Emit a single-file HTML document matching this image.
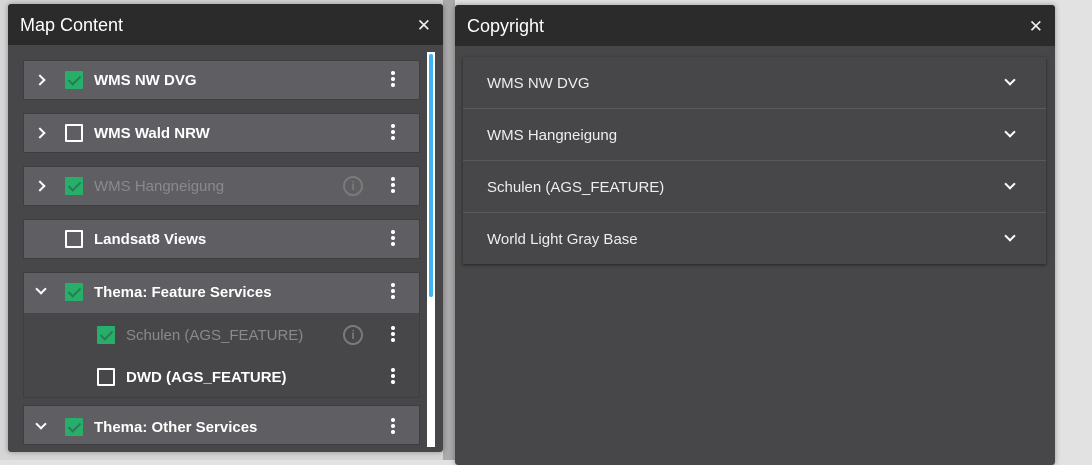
<!DOCTYPE html>
<html><head><meta charset="utf-8"><style>
*{box-sizing:border-box;margin:0;padding:0}
body{width:1092px;height:460px;overflow:hidden;background:#e2e2e2;font-family:"Liberation Sans",sans-serif;position:relative}
.bgl{position:absolute;left:0;top:0;width:455px;height:460px;background:#d6d6d6}
.gap{position:absolute;left:443px;top:0;width:12px;height:460px;background:#aaaaaa}
.p{position:absolute;background:#474749;box-shadow:0 0 6px rgba(0,0,0,.35)}
.hd{position:absolute;left:0;top:0;right:0;height:41px;background:#2b2b2b;color:#fff;font-size:18px;line-height:43px;padding-left:12px;border-radius:3px 3px 0 0}
.x{position:absolute;right:12px;top:0;font-size:17px;color:#eee}
.row{position:absolute;left:15px;width:397px;height:40px;background:#5f5f63;border:1px solid #3e3e40;color:#fff;font-weight:bold;font-size:15px}
.row span.t{position:absolute;left:70px;top:11px}
.cb{position:absolute;width:18px;height:18px;border:2px solid #fff;border-radius:1px}
.cb.on{background:#26ae6a;border:none}
.cb.on:after{content:"";position:absolute;left:6px;top:2px;width:5px;height:10px;border:solid #2a7a52;border-width:0 2px 2px 0;transform:rotate(45deg)}
.dots{position:absolute;width:4px;height:4px;background:#fff;border-radius:2px;box-shadow:0 6px 0 #fff,0 12px 0 #fff}
.ch{position:absolute;width:8px;height:8px;border:solid #fff;border-width:0 2.5px 2.5px 0}
.info{position:absolute;width:20px;height:20px;border:2px solid #7a7a7a;border-radius:50%;color:#7a7a7a;font-size:12px;font-weight:bold;text-align:center;line-height:16px}
.acc{position:absolute;left:8px;top:52px;width:583px;height:207px;background:#474749;box-shadow:0 1px 3px rgba(0,0,0,.5)}
.ai{height:52px;border-bottom:1px solid #5a5a5c;color:#eee;font-size:15px;line-height:54px;padding-left:24px;position:relative}
.ai:last-child{border-bottom:none}
.ai .ch{right:32px;top:19px;transform:rotate(45deg);width:8px;height:8px;border-width:0 2.5px 2.5px 0;border-color:#fff}
</style></head><body>
<div class="bgl"></div><div class="gap"></div>
<div class="p" style="left:8px;top:4px;width:435px;height:448px;border-radius:3px">
<div class="hd">Map Content<span class="x">✕</span></div>
<div style="position:absolute;left:419px;top:48px;width:8px;height:395px;background:#fff"></div>
<div style="position:absolute;left:421px;top:50px;width:4px;height:243px;background:#3db4f2;border-radius:2px"></div>

<div class="row" style="top:56px"><div class="ch" style="left:12px;top:15px;transform:rotate(-45deg)"></div><div class="cb on" style="left:41px;top:10px"></div><span class="t">WMS NW DVG</span><div class="dots" style="left:367px;top:10px"></div></div>
<div class="row" style="top:109px"><div class="ch" style="left:12px;top:15px;transform:rotate(-45deg)"></div><div class="cb" style="left:41px;top:10px"></div><span class="t">WMS Wald NRW</span><div class="dots" style="left:367px;top:10px"></div></div>
<div class="row" style="top:162px"><div class="ch" style="left:12px;top:15px;transform:rotate(-45deg)"></div><div class="cb on" style="left:41px;top:10px"></div><span class="t" style="color:#8a8a8c;font-weight:normal">WMS Hangneigung</span><div class="info" style="left:319px;top:9px">i</div><div class="dots" style="left:367px;top:10px"></div></div>
<div class="row" style="top:215px"><div class="cb" style="left:41px;top:10px"></div><span class="t">Landsat8 Views</span><div class="dots" style="left:367px;top:10px"></div></div>
<div class="row" style="top:268px;height:126px;background:#474749"><div style="position:absolute;left:0;top:0;right:0;height:40px;background:#5f5f63"></div>
<div class="ch" style="left:13px;top:12px;transform:rotate(45deg)"></div><div class="cb on" style="left:41px;top:10px"></div><span class="t">Thema: Feature Services</span><div class="dots" style="left:367px;top:10px"></div>
<div class="cb on" style="left:73px;top:53px"></div><span style="position:absolute;left:102px;top:54px;color:#8a8a8c;font-weight:normal">Schulen (AGS_FEATURE)</span><div class="info" style="left:319px;top:52px">i</div><div class="dots" style="left:367px;top:53px"></div>
<div class="cb" style="left:73px;top:95px"></div><span style="position:absolute;left:102px;top:96px">DWD (AGS_FEATURE)</span><div class="dots" style="left:367px;top:95px"></div>
</div>
<div class="row" style="top:401px"><div class="ch" style="left:13px;top:14px;transform:rotate(45deg)"></div><div class="cb on" style="left:41px;top:12px"></div><span class="t" style="top:13px">Thema: Other Services</span><div class="dots" style="left:367px;top:12px"></div></div>
</div>

<div class="p" style="left:455px;top:5px;width:600px;height:460px;border-radius:3px">
<div class="hd">Copyright<span class="x">✕</span></div>
<div class="acc">
<div class="ai">WMS NW DVG<div class="ch"></div></div>
<div class="ai">WMS Hangneigung<div class="ch"></div></div>
<div class="ai">Schulen (AGS_FEATURE)<div class="ch"></div></div>
<div class="ai">World Light Gray Base<div class="ch"></div></div>
</div>
</div>
</body></html>
